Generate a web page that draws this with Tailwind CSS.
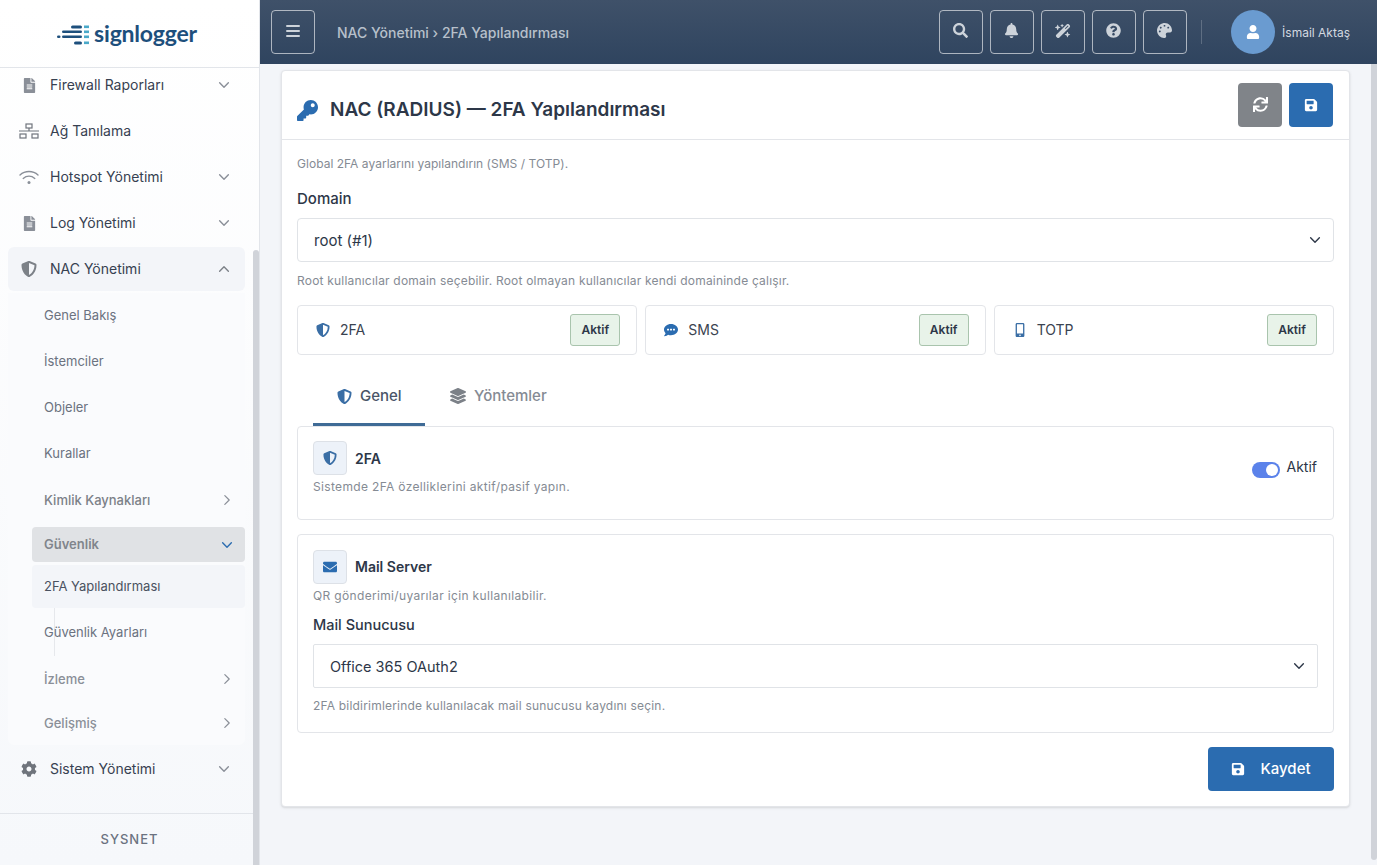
<!DOCTYPE html>
<html lang="tr">
<head>
  <meta charset="UTF-8">
  <title>NAC Yönetimi - 2FA Yapılandırması</title>
  <script src="https://cdn.jsdelivr.net/npm/@tailwindcss/browser@4"></script>
</head>
<body class="font-['Inter','Noto_Sans',sans-serif] bg-[#f3f5f9] text-[#2d3748] overflow-hidden">
  <!-- icon set -->
  <svg class="hidden">
    <symbol id="i-search" viewBox="0 0 512 512"><path d="M505 442.7L405.3 343c-4.5-4.5-10.6-7-17-7H372c27.6-35.3 44-79.7 44-128C416 93.1 322.9 0 208 0S0 93.1 0 208s93.1 208 208 208c48.3 0 92.7-16.4 128-44v16.3c0 6.4 2.5 12.5 7 17l99.7 99.7c9.4 9.4 24.6 9.4 33.9 0l28.3-28.3c9.4-9.4 9.4-24.6.1-34zM208 336c-70.7 0-128-57.2-128-128 0-70.7 57.2-128 128-128 70.7 0 128 57.2 128 128 0 70.7-57.2 128-128 128z"/></symbol>
    <symbol id="i-bell" viewBox="0 0 448 512"><path d="M224 512c35.32 0 63.97-28.65 63.97-64H160.03c0 35.35 28.65 64 63.97 64zm215.39-149.71c-19.32-20.76-55.47-51.99-55.47-154.29 0-77.7-54.48-139.9-127.94-155.16V32c0-17.67-14.32-32-31.98-32s-31.98 14.33-31.98 32v20.84C118.56 68.1 64.08 130.3 64.08 208c0 102.3-36.15 133.53-55.47 154.29-6 6.45-8.66 14.16-8.61 21.71.11 16.4 12.98 32 32.1 32h383.8c19.12 0 32-15.6 32.1-32 .05-7.55-2.61-15.27-8.61-21.71z"/></symbol>
    <symbol id="i-magic" viewBox="0 0 576 512"><path d="M234.7 42.7L197 56.8c-3 1.1-5 4-5 7.2s2 6.1 5 7.2l37.7 14.1L248.8 123c1.1 3 4 5 7.2 5s6.1-2 7.2-5l14.1-37.7L315 71.2c3-1.1 5-4 5-7.2s-2-6.1-5-7.2L277.3 42.7 263.2 5c-1.1-3-4-5-7.2-5s-6.1 2-7.2 5L234.7 42.7zM46.1 395.4c-18.7 18.7-18.7 49.1 0 67.9l34.6 34.6c18.7 18.7 49.1 18.7 67.9 0L529.9 116.5c18.7-18.7 18.7-49.1 0-67.9L495.3 14.1c-18.7-18.7-49.1-18.7-67.9 0L46.1 395.4zM484.6 82.6l-105 105-23.3-23.3 105-105 23.3 23.3zM7.5 117.2C3 118.9 0 123.2 0 128s3 9.1 7.5 10.8L64 160l21.2 56.5c1.7 4.5 6 7.5 10.8 7.5s9.1-3 10.8-7.5L128 160l56.5-21.2c4.5-1.7 7.5-6 7.5-10.8s-3-9.1-7.5-10.8L128 96 106.8 39.5C105.1 35 100.8 32 96 32s-9.1 3-10.8 7.5L64 96 7.5 117.2zm352 256c-4.5 1.7-7.5 6-7.5 10.8s3 9.1 7.5 10.8L416 416l21.2 56.5c1.7 4.5 6 7.5 10.8 7.5s9.1-3 10.8-7.5L480 416l56.5-21.2c4.5-1.7 7.5-6 7.5-10.8s-3-9.1-7.5-10.8L480 352l-21.2-56.5c-1.7-4.5-6-7.5-10.8-7.5s-9.1 3-10.8 7.5L416 352l-56.5 21.2z"/></symbol>
    <symbol id="i-question" viewBox="0 0 512 512"><path d="M504 256c0 136.997-111.043 248-248 248S8 392.997 8 256C8 119.083 119.043 8 256 8s248 111.083 248 248zM262.655 90c-54.497 0-89.255 22.957-116.549 63.758-3.536 5.286-2.353 12.415 2.715 16.258l34.699 26.31c5.205 3.947 12.621 3.008 16.665-2.122 17.864-22.658 30.113-35.797 57.303-35.797 20.429 0 45.698 13.148 45.698 32.958 0 14.976-12.363 22.667-32.534 33.976C247.128 238.528 216 254.941 216 296v4c0 6.627 5.373 12 12 12h56c6.627 0 12-5.373 12-12v-1.333c0-28.462 83.186-29.647 83.186-106.667 0-58.002-60.165-102-116.531-102zM256 338c-25.365 0-46 20.635-46 46 0 25.364 20.635 46 46 46s46-20.636 46-46c0-25.365-20.635-46-46-46z"/></symbol>
    <symbol id="i-palette" viewBox="0 0 512 512"><path d="M204.3 5C104.9 24.4 24.8 104.3 5.2 203.4c-37 187 131.7 326.4 258.8 306.7 41.2-6.4 61.4-54.6 42.5-91.7-23.1-45.4 9.9-98.4 60.9-98.4h79.7c35.8 0 64.8-29.6 64.9-65.3C511.5 97.1 368.1-26.9 204.3 5zM96 320c-17.7 0-32-14.3-32-32s14.3-32 32-32 32 14.3 32 32-14.3 32-32 32zm32-128c-17.7 0-32-14.3-32-32s14.3-32 32-32 32 14.3 32 32-14.3 32-32 32zm128-64c-17.7 0-32-14.3-32-32s14.3-32 32-32 32 14.3 32 32-14.3 32-32 32zm128 64c-17.7 0-32-14.3-32-32s14.3-32 32-32 32 14.3 32 32-14.3 32-32 32z"/></symbol>
    <symbol id="i-user" viewBox="0 0 448 512"><path d="M224 256c70.7 0 128-57.3 128-128S294.7 0 224 0 96 57.3 96 128s57.3 128 128 128zm89.6 32h-16.7c-22.2 10.2-46.9 16-72.9 16s-50.6-5.8-72.9-16h-16.7C60.2 288 0 348.2 0 422.4V464c0 26.5 21.5 48 48 48h352c26.5 0 48-21.5 48-48v-41.6c0-74.2-60.2-134.4-134.4-134.4z"/></symbol>
    <symbol id="i-sync" viewBox="0 0 512 512"><path d="M440.65 12.57l4 82.77A247.16 247.16 0 0 0 255.83 8C134.73 8 33.91 94.92 12.29 209.82A12 12 0 0 0 24.09 224h49.05a12 12 0 0 0 11.67-9.26 175.91 175.91 0 0 1 317-56.94l-101.46-4.86a12 12 0 0 0-12.57 12v47.41a12 12 0 0 0 12 12H500a12 12 0 0 0 12-12V12a12 12 0 0 0-12-12h-47.37a12 12 0 0 0-11.98 12.57zM255.83 432a175.61 175.61 0 0 1-146-77.8l101.8 4.87a12 12 0 0 0 12.57-12v-47.4a12 12 0 0 0-12-12H12a12 12 0 0 0-12 12V500a12 12 0 0 0 12 12h47.35a12 12 0 0 0 12-12.6l-4.15-82.57A247.17 247.17 0 0 0 255.83 504c121.11 0 221.93-86.92 243.55-201.82a12 12 0 0 0-11.8-14.18h-49.05a12 12 0 0 0-11.67 9.26A175.86 175.86 0 0 1 255.83 432z"/></symbol>
    <symbol id="i-save" viewBox="0 0 448 512"><path d="M433.941 129.941l-83.882-83.882A48 48 0 0 0 316.118 32H48C21.49 32 0 53.49 0 80v352c0 26.51 21.49 48 48 48h352c26.51 0 48-21.49 48-48V163.882a48 48 0 0 0-14.059-33.941zM224 416c-35.346 0-64-28.654-64-64 0-35.346 28.654-64 64-64s64 28.654 64 64c0 35.346-28.654 64-64 64zm96-304.52V212c0 6.627-5.373 12-12 12H76c-6.627 0-12-5.373-12-12V108c0-6.627 5.373-12 12-12h228.52c3.183 0 6.235 1.264 8.485 3.515l3.48 3.48A11.996 11.996 0 0 1 320 111.48z"/></symbol>
    <symbol id="i-key" viewBox="0 0 512 512"><path d="M512 176.001C512 273.203 433.202 352 336 352c-11.22 0-22.19-1.062-32.827-3.069l-24.012 27.014A23.999 23.999 0 0 1 261.223 384H224v40c0 13.255-10.745 24-24 24h-40v40c0 13.255-10.745 24-24 24H24c-13.255 0-24-10.745-24-24v-78.059c0-6.365 2.529-12.47 7.029-16.971l161.802-161.802C163.108 213.814 160 195.271 160 176 160 78.798 238.797.001 335.999 0 433.488-.001 512 78.511 512 176.001zM336 128c0 26.51 21.49 48 48 48s48-21.49 48-48-21.49-48-48-48-48 21.49-48 48z"/></symbol>
    <symbol id="i-shield" viewBox="0 0 512 512"><path d="M466.5 83.7l-192-80a48.15 48.15 0 0 0-36.9 0l-192 80C27.7 91.1 16 108.6 16 128c0 198.5 114.5 335.7 221.5 380.3 11.8 4.9 25.1 4.9 36.9 0C360.1 472.6 496 349.3 496 128c0-19.4-11.7-36.9-29.5-44.3zM256.1 446.3l-.1-381 175.9 73.3c-3.3 151.4-82.1 261.1-175.8 307.7z"/></symbol>
    <symbol id="i-envelope" viewBox="0 0 512 512"><path d="M502.3 190.8c3.9-3.1 9.7-.2 9.7 4.7V400c0 26.5-21.5 48-48 48H48c-26.5 0-48-21.5-48-48V195.6c0-5 5.7-7.8 9.7-4.7 22.4 17.4 52.1 39.5 154.1 113.6 21.1 15.4 56.7 47.8 92.2 47.6 35.7.3 72-32.8 92.3-47.6 102-74.1 131.6-96.3 154-113.7zM256 320c23.2.4 56.6-29.2 73.4-41.4 132.7-96.3 142.8-104.7 173.4-128.7 5.8-4.5 9.2-11.5 9.2-18.9v-19c0-26.5-21.5-48-48-48H48C21.5 64 0 85.5 0 112v19c0 7.4 3.4 14.3 9.2 18.9 30.6 23.9 40.7 32.4 173.4 128.7 16.8 12.2 50.2 41.8 73.4 41.4z"/></symbol>
    <symbol id="i-cog" viewBox="0 0 512 512"><path d="M487.4 315.7l-42.6-24.6c4.3-23.2 4.3-47 0-70.2l42.6-24.6c4.9-2.8 7.1-8.6 5.5-14-11.1-35.6-30-67.8-54.7-94.6-3.8-4.1-10-5.1-14.8-2.3L380.8 110c-17.9-15.4-38.5-27.3-60.8-35.1V25.8c0-5.6-3.9-10.5-9.4-11.7-36.7-8.2-74.3-7.8-109.2 0-5.5 1.2-9.4 6.1-9.4 11.7V75c-22.2 7.9-42.8 19.8-60.8 35.1L88.7 85.5c-4.9-2.8-11-1.9-14.8 2.3-24.7 26.7-43.6 58.9-54.7 94.6-1.7 5.4.6 11.2 5.5 14L67.3 221c-4.3 23.2-4.3 47 0 70.2l-42.6 24.6c-4.9 2.8-7.1 8.6-5.5 14 11.1 35.6 30 67.8 54.7 94.6 3.8 4.1 10 5.1 14.8 2.3l42.6-24.6c17.9 15.4 38.5 27.3 60.8 35.1v49.2c0 5.6 3.9 10.5 9.4 11.7 36.7 8.2 74.3 7.8 109.2 0 5.5-1.2 9.4-6.1 9.4-11.7v-49.2c22.2-7.9 42.8-19.8 60.8-35.1l42.6 24.6c4.9 2.8 11 1.9 14.8-2.3 24.7-26.7 43.6-58.9 54.7-94.6 1.5-5.5-.7-11.3-5.6-14.1zM256 336c-44.1 0-80-35.9-80-80s35.9-80 80-80 80 35.9 80 80-35.9 80-80 80z"/></symbol>
    <symbol id="i-file" viewBox="0 0 384 512"><path d="M224 136V0H24C10.7 0 0 10.7 0 24v464c0 13.3 10.7 24 24 24h336c13.3 0 24-10.7 24-24V160H248c-13.2 0-24-10.8-24-24zm64 236c0 6.6-5.4 12-12 12H108c-6.6 0-12-5.4-12-12v-8c0-6.6 5.4-12 12-12h168c6.6 0 12 5.4 12 12v8zm0-64c0 6.6-5.4 12-12 12H108c-6.6 0-12-5.4-12-12v-8c0-6.6 5.4-12 12-12h168c6.6 0 12 5.4 12 12v8zm0-72v8c0 6.6-5.4 12-12 12H108c-6.6 0-12-5.4-12-12v-8c0-6.6 5.4-12 12-12h168c6.6 0 12 5.4 12 12zm96-114.1v6.1H256V0h6.1c6.4 0 12.5 2.5 17 7l97.9 98c4.5 4.5 7 10.6 7 16.9z"/></symbol>
    <symbol id="i-mobile" viewBox="0 0 320 512"><path d="M272 0H48C21.5 0 0 21.5 0 48v416c0 26.5 21.5 48 48 48h224c26.5 0 48-21.5 48-48V48c0-26.5-21.5-48-48-48zM160 480c-17.7 0-32-14.3-32-32s14.3-32 32-32 32 14.3 32 32-14.3 32-32 32zm112-108c0 6.6-5.4 12-12 12H60c-6.6 0-12-5.4-12-12V60c0-6.6 5.4-12 12-12h200c6.6 0 12 5.4 12 12v312z"/></symbol>
    <symbol id="i-layers" viewBox="0 0 512 512"><path d="M12.41 148.02l232.94 105.67c6.8 3.09 14.49 3.09 21.29 0l232.94-105.67c16.55-7.51 16.55-32.52 0-40.03L266.65 2.31a25.607 25.607 0 0 0-21.29 0L12.41 107.98c-16.55 7.51-16.55 32.53 0 40.04zm487.18 88.28l-58.09-26.33-161.64 73.27c-7.56 3.43-15.59 5.17-23.86 5.17s-16.29-1.74-23.86-5.17L70.51 209.97l-58.1 26.33c-16.55 7.5-16.55 32.5 0 40l232.94 105.59c6.8 3.08 14.49 3.08 21.29 0L499.59 276.3c16.55-7.5 16.55-32.5 0-40zm0 127.8l-57.87-26.23-161.86 73.37c-7.56 3.43-15.59 5.17-23.86 5.17s-16.29-1.74-23.86-5.17L70.29 337.87 12.41 364.1c-16.55 7.5-16.55 32.5 0 40l232.94 105.59c6.8 3.08 14.49 3.08 21.29 0L499.59 404.1c16.55-7.5 16.55-32.5 0-40z"/></symbol>
    <symbol id="i-sms" viewBox="0 0 512 512"><path d="M256 32C114.6 32 0 125.1 0 240c0 49.6 21.4 95 57 130.7C44.5 421.1 2.7 466 2.2 466.5c-2.2 2.3-2.8 5.7-1.5 8.7 1.3 3 4.1 4.8 7.3 4.8 66.3 0 116-31.8 140.6-51.4 32.7 12.3 69 19.4 107.4 19.4 141.4 0 256-93.1 256-208S397.4 32 256 32z"/><g fill="#fff"><rect x="112" y="208" width="72" height="64" rx="12"/><rect x="220" y="208" width="72" height="64" rx="12"/><rect x="328" y="208" width="72" height="64" rx="12"/></g></symbol>
    <symbol id="i-down" viewBox="0 0 16 16"><path d="M3 5.5l5 5 5-5" fill="none" stroke="currentColor" stroke-width="1.6" stroke-linecap="round" stroke-linejoin="round"/></symbol>
    <symbol id="i-up" viewBox="0 0 16 16"><path d="M3 10.5l5-5 5 5" fill="none" stroke="currentColor" stroke-width="1.6" stroke-linecap="round" stroke-linejoin="round"/></symbol>
    <symbol id="i-right" viewBox="0 0 16 16"><path d="M5.5 3l5 5-5 5" fill="none" stroke="currentColor" stroke-width="1.4" stroke-linecap="round" stroke-linejoin="round"/></symbol>
  </svg>

  <div class="flex h-[865px] w-[1377px]">
    <!-- Sidebar -->
    <aside class="relative flex flex-col w-[260px] shrink-0 h-full bg-gradient-to-b from-white to-[#f6f8fb] border-r border-[#e2e5ea]">
      <div class="flex items-center justify-center gap-[5px] h-[68px] shrink-0 border-b border-[#e2e5ea] pr-[5px]">
        <svg class="w-[32px] h-[20px] mt-[2px]" viewBox="0 0 32 20">
          <rect x="14" y="0.5" width="11" height="3" rx="1.5" fill="#1d4f7c"/>
          <rect x="27" y="0.5" width="5" height="2.6" fill="#4aa9c9"/>
          <rect x="5" y="5.5" width="20" height="2.6" rx="1.3" fill="#1d4f7c"/>
          <rect x="27" y="5.5" width="5" height="2.6" fill="#4aa9c9"/>
          <rect x="0" y="10.5" width="3.5" height="2.6" rx="1.3" fill="#1d4f7c"/>
          <rect x="5" y="10.5" width="20" height="2.6" rx="1.3" fill="#1d4f7c"/>
          <rect x="27" y="10.5" width="5" height="2.6" fill="#4aa9c9"/>
          <rect x="17" y="16.5" width="8" height="3" rx="1.5" fill="#1d4f7c"/>
          <rect x="27" y="16.5" width="5" height="2.6" fill="#4aa9c9"/>
        </svg>
        <span class="font-['Lato',sans-serif] font-bold text-[23px] tracking-[-0.2px] leading-none text-[#1d4f7c]">signlogger</span>
      </div>

      <nav class="flex-1 overflow-hidden px-2 text-sm">
        <div class="-mt-[5px] w-[237px]">
          <a class="flex items-center h-11 mb-[2px] pr-[14px] text-[#374151]"><span class="flex justify-center w-[42px]"><svg class="h-[15px] w-[13px] fill-[#8a8f98]"><use href="#i-file"/></svg></span><span class="flex-1">Firewall Raporları</span><svg class="size-[14px] text-[#8a8f98]"><use href="#i-down"/></svg></a>
          <a class="flex items-center h-11 mb-[2px] pr-[14px] text-[#374151]">
            <span class="flex justify-center w-[42px]"><svg class="w-[20px] h-[16px] text-[#6f747c]" viewBox="0 0 20 16" fill="none" stroke="currentColor" stroke-width="1.2"><rect x="7" y="1" width="6" height="4"/><rect x="1" y="11" width="6" height="4"/><rect x="13" y="11" width="6" height="4"/><path d="M0 8h20M10 5v3"/></svg></span>
            <span class="flex-1">Ağ Tanılama</span>
          </a>
          <a class="flex items-center h-11 mb-[2px] pr-[14px] text-[#374151]">
            <span class="flex justify-center w-[42px]"><svg class="w-[20px] h-[15px] text-[#8a8f98]" viewBox="0 0 20 15" fill="none" stroke="currentColor" stroke-width="1.4" stroke-linecap="round"><path d="M1 5c5-4.6 13-4.6 18 0M4.2 8.4c3.4-3 8.2-3 11.6 0"/><circle cx="10" cy="12.6" r="1.5" fill="currentColor" stroke="none"/></svg></span>
            <span class="flex-1">Hotspot Yönetimi</span><svg class="size-[14px] text-[#8a8f98]"><use href="#i-down"/></svg>
          </a>
          <a class="flex items-center h-11 mb-[2px] pr-[14px] text-[#374151]"><span class="flex justify-center w-[42px]"><svg class="h-[15px] w-[13px] fill-[#8a8f98]"><use href="#i-file"/></svg></span><span class="flex-1">Log Yönetimi</span><svg class="size-[14px] text-[#8a8f98]"><use href="#i-down"/></svg></a>

          <!-- NAC group -->
          <a class="flex items-center h-11 mb-[2px] pr-[14px] text-[#374151] bg-[#f3f5f9] rounded-md"><span class="flex justify-center w-[42px]"><svg class="size-4 fill-[#7c8188]"><use href="#i-shield"/></svg></span><span class="flex-1">NAC Yönetimi</span><svg class="size-[14px] text-[#7c8188]"><use href="#i-up"/></svg></a>
          <div class="relative bg-[#fafbfd] rounded-b-md text-[13px] text-[#6b7280]">
            <a class="flex items-center h-11 mb-[2px] pl-9">Genel Bakış</a>
            <a class="flex items-center h-11 mb-[2px] pl-9">İstemciler</a>
            <a class="flex items-center h-11 mb-[2px] pl-9">Objeler</a>
            <a class="flex items-center h-11 mb-[2px] pl-9">Kurallar</a>
            <a class="flex items-center h-[46px] pl-9 pr-[11px] font-medium text-[#7c8188]"><span class="flex-1">Kimlik Kaynakları</span><svg class="size-[14px] text-[#8a8f98]"><use href="#i-right"/></svg></a>
            <a class="flex items-center h-[35px] mt-1 ml-6 pl-3 pr-[11px] bg-[#e0e2e5] rounded font-semibold text-[#80858c]"><span class="flex-1">Güvenlik</span><svg class="size-[14px] text-[#2b6cb0]"><use href="#i-down"/></svg></a>
            <a class="flex items-center h-[43px] mt-[3px] mb-[2px] ml-6 pl-3 bg-[#f3f5f9] rounded text-[#4a5260]">2FA Yapılandırması</a>
            <div class="relative">
              <span class="absolute left-[46px] -top-[2px] h-[48px] w-px bg-[#e6e8ec]"></span>
              <a class="relative flex items-center h-11 pl-9">Güvenlik Ayarları</a>
            </div>
            <a class="flex items-center h-11 mt-[3px] pl-9 pr-[11px] font-medium text-[#8a8f98]"><span class="flex-1">İzleme</span><svg class="size-[14px] text-[#8a8f98]"><use href="#i-right"/></svg></a>
            <a class="flex items-center h-11 pl-9 pr-[11px] font-medium text-[#8a8f98]"><span class="flex-1">Gelişmiş</span><svg class="size-[14px] text-[#8a8f98]"><use href="#i-right"/></svg></a>
          </div>
          <a class="flex items-center h-11 mt-[2px] pr-[14px] text-[#374151]"><span class="flex justify-center w-[42px]"><svg class="size-4 fill-[#6f747c]"><use href="#i-cog"/></svg></span><span class="flex-1">Sistem Yönetimi</span><svg class="size-[14px] text-[#8a8f98]"><use href="#i-down"/></svg></a>
        </div>
      </nav>

      <div class="flex items-center justify-center h-[52px] shrink-0 border-t border-[#e2e5ea] text-[13px] font-medium tracking-[1px] text-[#6b7280]">SYSNET</div>
      <!-- scrollbar -->
      <span class="absolute right-0 top-[250px] bottom-0 w-[6px] rounded-t bg-[#d0d3d9]"></span>
    </aside>

    <!-- Main column -->
    <div class="relative flex flex-col flex-1 min-w-0">
      <header class="flex items-center h-16 shrink-0 pl-[11px] pr-[27px] bg-gradient-to-b from-[#3f5169] to-[#2f445f] text-white">
        <button class="flex items-center justify-center size-11 rounded border border-white/60">
          <svg class="w-[14px] h-[16px] -mt-[3px] -ml-[1px] text-[#cdd3da]" viewBox="0 0 14 16" fill="none" stroke="currentColor" stroke-width="2" stroke-linecap="round"><path d="M1 3h12M1 8h12M1 13h12"/></svg>
        </button>
        <div class="ml-[22px] mt-[2px] flex-1 text-sm font-medium text-[#b7c0cb]">NAC Yönetimi › 2FA Yapılandırması</div>
        <div class="flex items-center gap-[7px]">
          <button class="flex items-center justify-center size-11 rounded border border-white/60"><svg class="size-[15px] -mt-[3px] -ml-[1px] fill-[#cdd3da]"><use href="#i-search"/></svg></button>
          <button class="flex items-center justify-center size-11 rounded border border-white/60"><svg class="size-[15px] -mt-[3px] -ml-[1px] fill-[#cdd3da]"><use href="#i-bell"/></svg></button>
          <button class="flex items-center justify-center size-11 rounded border border-white/60"><svg class="size-[16px] -mt-[3px] -ml-[1px] fill-[#cdd3da]"><use href="#i-magic"/></svg></button>
          <button class="flex items-center justify-center size-11 rounded border border-white/60"><svg class="size-[15px] -mt-[3px] -ml-[1px] fill-[#cdd3da]"><use href="#i-question"/></svg></button>
          <button class="flex items-center justify-center size-11 rounded border border-white/60"><svg class="size-[15px] -mt-[3px] -ml-[1px] fill-[#cdd3da]"><use href="#i-palette"/></svg></button>
        </div>
        <span class="mx-[14px] h-6 w-px bg-white/20"></span>
        <div class="flex items-center justify-center ml-[15px] size-11 rounded-full bg-[#6a9bd0]"><svg class="size-[14px] fill-white"><use href="#i-user"/></svg></div>
        <span class="ml-[7px] mt-[1px] text-xs text-[#d3d9e0]">İsmail Aktaş</span>
      </header>

      <main class="flex-1 pt-[6px] pl-[21px] pr-[27px]">
        <div class="bg-white rounded border border-[#e3e5e9] shadow-sm">
          <div class="flex items-center justify-between h-[69px] pl-[15px] pr-4 border-b border-[#e3e5e9]">
            <div class="flex items-center gap-3 mt-[10px]">
              <svg class="size-[21px] fill-[#2b6cb0]"><use href="#i-key"/></svg>
              <h1 class="text-[19px] font-semibold text-[#2d3748]">NAC (RADIUS) — 2FA Yapılandırması</h1>
            </div>
            <div class="flex gap-[7px] -mt-[1px]">
              <button class="flex items-center justify-center size-11 rounded bg-[#808489]"><svg class="size-[15px] fill-white"><use href="#i-sync"/></svg></button>
              <button class="flex items-center justify-center size-11 rounded bg-[#2b6cb0]"><svg class="size-[14px] fill-white"><use href="#i-save"/></svg></button>
            </div>
          </div>

          <div class="px-[15px] pt-4 pb-[15px]">
            <p class="text-xs tracking-[0.03px] leading-[16px] text-[#858b94]">Global 2FA ayarlarını yapılandırın (SMS / TOTP).</p>
            <label class="block mt-[17px] text-[15px] font-medium leading-[20px] text-[#2d3748]">Domain</label>
            <div class="relative mt-[9px]">
              <select class="block w-full h-11 appearance-none rounded border border-[#e0e3e7] bg-white pl-4 pt-[2px] text-[15px] text-[#2d3748]"><option>root (#1)</option></select>
              <svg class="absolute right-[12px] top-[15px] size-[14px] text-[#2d3748]"><use href="#i-down"/></svg>
            </div>
            <p class="mt-[11px] text-xs tracking-[0.2px] leading-[16px] text-[#858b94]">Root kullanıcılar domain seçebilir. Root olmayan kullanıcılar kendi domaininde çalışır.</p>

            <div class="grid grid-cols-3 gap-2 mt-4">
              <div class="flex items-center justify-between h-[50px] pl-[18px] pr-4 rounded border border-[#e3e5e9]">
                <div class="flex items-center gap-[10px] text-sm text-[#3a4350]"><svg class="size-[14px] fill-[#3a6ea5]"><use href="#i-shield"/></svg>2FA</div>
                <span class="flex items-center justify-center w-[50px] h-8 rounded-[3px] border border-[#a9c4ad] bg-[#e8f3e9] text-xs font-semibold text-[#2d3748]">Aktif</span>
              </div>
              <div class="flex items-center justify-between h-[50px] pl-[18px] pr-4 rounded border border-[#e3e5e9]">
                <div class="flex items-center gap-[10px] text-sm text-[#3a4350]"><svg class="size-[14px] fill-[#2b6cb0]"><use href="#i-sms"/></svg>SMS</div>
                <span class="flex items-center justify-center w-[50px] h-8 rounded-[3px] border border-[#a9c4ad] bg-[#e8f3e9] text-xs font-semibold text-[#2d3748]">Aktif</span>
              </div>
              <div class="flex items-center justify-between h-[50px] pl-[18px] pr-4 rounded border border-[#e3e5e9]">
                <div class="flex items-center gap-[10px] text-sm text-[#3a4350]"><svg class="size-[14px] fill-[#3a6ea5]"><use href="#i-mobile"/></svg>TOTP</div>
                <span class="flex items-center justify-center w-[50px] h-8 rounded-[3px] border border-[#a9c4ad] bg-[#e8f3e9] text-xs font-semibold text-[#2d3748]">Aktif</span>
              </div>
            </div>

            <div class="flex mt-[25px] ml-4 h-[46px] text-[15px] font-medium">
              <div class="flex items-center gap-[8px] w-[112px] pl-6 pb-[11px] border-b-[3px] border-[#3f6b96] text-[#4a5568]"><svg class="size-[15px] fill-[#3a6ea5]"><use href="#i-shield"/></svg>Genel</div>
              <div class="flex items-center gap-[8px] pl-[25px] pb-[14px] text-[#858b94]"><svg class="size-[16px] fill-[#7c8188]"><use href="#i-layers"/></svg>Yöntemler</div>
            </div>

            <div class="flex justify-between h-[94px] pl-[15px] pr-4 pt-[14px] rounded border border-[#e3e5e9]">
              <div>
                <div class="flex items-center gap-2">
                  <div class="flex items-center justify-center size-[34px] rounded border border-[#dde1e7] bg-[#edf2f9]"><svg class="size-[14px] fill-[#3a6ea5]"><use href="#i-shield"/></svg></div>
                  <span class="mt-[1px] text-sm font-semibold text-[#2d3748]">2FA</span>
                </div>
                <p class="mt-[4px] text-xs tracking-[0.34px] leading-[16px] text-[#858b94]">Sistemde 2FA özelliklerini aktif/pasif yapın.</p>
              </div>
              <div class="flex items-start gap-[7px] pt-[17px]">
                <span class="flex items-center justify-end mt-[4px] w-7 h-4 rounded-full bg-[#5b82ea] pr-[2px]"><span class="size-3 rounded-full bg-white"></span></span>
                <span class="text-sm leading-[18px] text-[#2d3748]">Aktif</span>
              </div>
            </div>

            <div class="mt-[14px] h-[199px] pl-[15px] pr-[15px] pt-[15px] rounded border border-[#e3e5e9]">
              <div class="flex items-center gap-2">
                <div class="flex items-center justify-center size-[34px] rounded border border-[#dde1e7] bg-[#edf2f9]"><svg class="size-[14px] fill-[#2b6cb0]"><use href="#i-envelope"/></svg></div>
                <span class="text-sm font-semibold text-[#2d3748]">Mail Server</span>
              </div>
              <p class="mt-[4px] text-xs tracking-[0.34px] leading-[16px] text-[#858b94]">QR gönderimi/uyarılar için kullanılabilir.</p>
              <label class="block mt-[11px] text-[14.5px] font-medium leading-[20px] text-[#2d3748]">Mail Sunucusu</label>
              <div class="relative mt-[9px]">
                <select class="block w-full h-11 appearance-none rounded-[2px] border border-[#e0e3e7] bg-white pl-4 pt-[2px] text-[14.5px] text-[#2d3748]"><option>Office 365 OAuth2</option></select>
                <svg class="absolute right-[12px] top-[15px] size-[14px] text-[#2d3748]"><use href="#i-down"/></svg>
              </div>
              <p class="mt-[10px] text-xs tracking-[0.2px] leading-[16px] text-[#858b94]">2FA bildirimlerinde kullanılacak mail sunucusu kaydını seçin.</p>
            </div>

            <div class="flex justify-end mt-[14px]">
              <button class="flex items-center justify-center gap-[15px] w-[126px] h-11 rounded bg-[#2b6cb0] text-[15px] font-medium text-white"><svg class="size-[14px] fill-white"><use href="#i-save"/></svg>Kaydet</button>
            </div>
          </div>
        </div>
      </main>
      <!-- page scrollbar -->
      <span class="absolute right-0 top-16 bottom-[5px] w-[6px] rounded-b bg-[#d0d3d9]"></span>
    </div>
  </div>
</body>
</html>
